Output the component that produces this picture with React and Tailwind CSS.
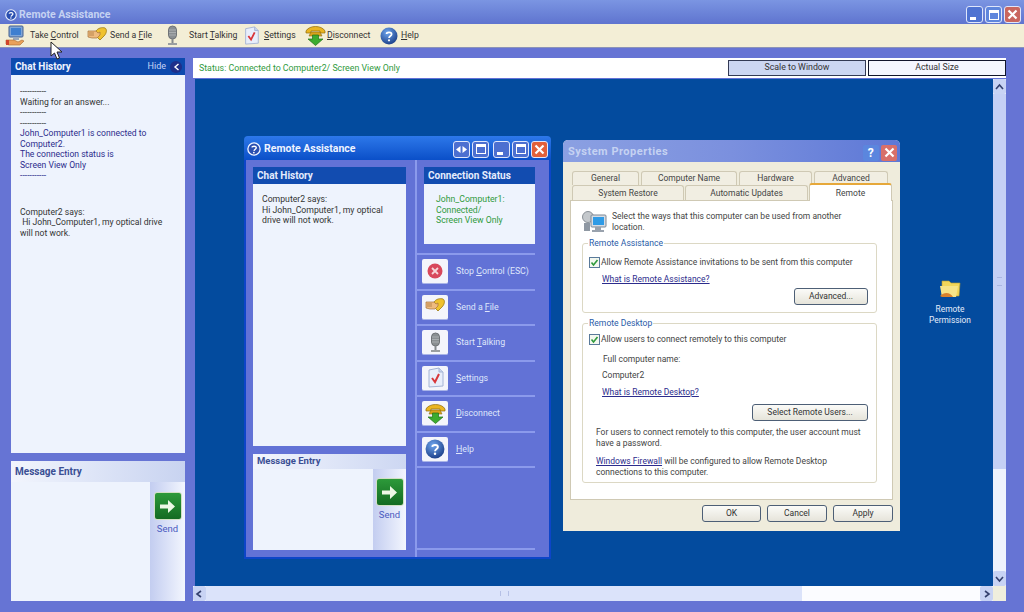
import React from 'react';

const font = { fontFamily: 'Roboto, "Liberation Sans", sans-serif' };

function RaGlyph({ size = 14 }) {
  return (
    <svg width={size} height={size} viewBox="0 0 16 16" className="shrink-0">
      <circle cx="8" cy="8" r="7" fill="#2a4fb0" stroke="#eef3ff" strokeWidth="1.5" />
      <path d="M5.5 6.2C5.8 4.4 10.4 4.2 10.6 6.4C10.7 8 8.3 8.4 8 10.2" fill="none" stroke="#fff" strokeWidth="1.6" />
      <circle cx="7.8" cy="12" r="1" fill="#fff" />
    </svg>
  );
}

function TakeControlIcon() {
  return (
    <svg width="21" height="21" viewBox="0 0 21 21" className="shrink-0">
      <rect x="4" y="1" width="14" height="11" rx="1" fill="#7fa6d8" stroke="#47608f" />
      <rect x="6" y="3" width="10" height="7" fill="#3f7fd0" />
      <path d="M8 12h6v3H8z" fill="#9aa9bd" />
      <path d="M1 15h8l4 2 4-2 2 1-4 4H4l-3-1z" fill="#e9a15a" stroke="#a8642a" strokeWidth=".6" />
      <path d="M1 15h3v5H1z" fill="#d0442a" />
    </svg>
  );
}

function SendFileIcon({ size = 21 }) {
  return (
    <svg width={size} height={size} viewBox="0 0 21 21" className="shrink-0">
      <path d="M9 6c2-3 6-4 9-3 2 1 2 5-1 8l-4 4-3-3c-1-2-2-4-1-6z" fill="#f0c22e" stroke="#9c7a12" strokeWidth=".8" />
      <path d="M1 6h8l2 2 2-1v3l-3 3H5l-4-1z" fill="#efbb7f" stroke="#a5713a" strokeWidth=".7" />
      <path d="M2 8h5M2 10h5" stroke="#a5713a" strokeWidth=".7" />
    </svg>
  );
}

function MicIcon({ size = 21 }) {
  return (
    <svg width={size} height={size} viewBox="0 0 21 21" className="shrink-0">
      <rect x="6.5" y="1" width="8" height="13" rx="4" fill="#8a8f92" stroke="#6f7376" />
      <path d="M7 5h7M7 7.5h7M7 10h7" stroke="#a9adb0" />
      <path d="M10.5 14v4" stroke="#85898c" strokeWidth="2" />
      <path d="M6 19h9" stroke="#9a9ea1" strokeWidth="2" />
    </svg>
  );
}

function SettingsIcon({ size = 21 }) {
  return (
    <svg width={size} height={size} viewBox="0 0 21 21" className="shrink-0">
      <path d="M4 3l10-2 4 4v14l-14 1z" fill="#e8eefb" stroke="#a5b4d4" />
      <path d="M14 1v4h4" fill="#c8d4ec" stroke="#a5b4d4" />
      <path d="M7 11l3 4 4-8" fill="none" stroke="#d8363a" strokeWidth="2" />
    </svg>
  );
}

function PhoneIcon({ size = 21 }) {
  return (
    <svg width={size} height={size} viewBox="0 0 21 21" className="shrink-0">
      <path d="M1 6c3-6 16-6 19 0v2h-5V6H6v2H1z" fill="#eab521" stroke="#8c6a10" strokeWidth=".7" />
      <path d="M6 7h9l2 4H4z" fill="#d8a31c" stroke="#8c6a10" strokeWidth=".6" />
      <path d="M7.5 10h6v4H18l-7.5 6.5L3 14h4.5z" fill="#3cab2e" stroke="#1f7018" strokeWidth=".7" />
    </svg>
  );
}

function HelpIcon({ size = 18 }) {
  return (
    <svg width={size} height={size} viewBox="0 0 18 18" className="shrink-0">
      <defs>
        <radialGradient id="helpball" cx=".4" cy=".3" r=".8">
          <stop offset="0" stopColor="#6ea6ee" />
          <stop offset="1" stopColor="#14357f" />
        </radialGradient>
      </defs>
      <circle cx="9" cy="9" r="8.5" fill="url(#helpball)" />
      <path d="M6.5 7C6.8 4.8 11.6 4.8 11.6 7.2C11.6 9 9.2 9 9 11" fill="none" stroke="#fff" strokeWidth="1.7" />
      <circle cx="9" cy="13.3" r="1.1" fill="#fff" />
    </svg>
  );
}

function StopIcon() {
  return (
    <svg width="16" height="16" viewBox="0 0 16 16" className="shrink-0">
      <circle cx="8" cy="8" r="7.5" fill="#d8485c" />
      <path d="M5 5l6 6M11 5l-6 6" stroke="#f6d6da" strokeWidth="1.8" />
    </svg>
  );
}

function NetworkIcon() {
  return (
    <svg width="26" height="26" viewBox="0 0 26 26" className="shrink-0">
      <circle cx="6" cy="8" r="5.5" fill="#c4c8cc" stroke="#8a9097" />
      <rect x="9" y="6" width="15" height="12" rx="1" fill="#d6dce4" stroke="#7d8794" />
      <rect x="11" y="8" width="11" height="8" fill="#2f9be6" />
      <path d="M13 18h6v3h3v2H10v-2h3z" fill="#99a2ad" />
      <path d="M2 14h6v8H2z" fill="#8f98a3" />
    </svg>
  );
}

function FolderIcon() {
  return (
    <svg width="24" height="24" viewBox="0 0 24 24" className="shrink-0">
      <path d="M4 4h7l2 2h9l-1 13H4z" fill="#f2d65a" stroke="#b69a2c" strokeWidth=".6" />
      <path d="M2 9h18l-2 11H4z" fill="#f7e488" />
      <path d="M2 19c4-4 10-4 13 1H4z" fill="#d9822e" />
    </svg>
  );
}

function SendButton() {
  return (
    <div className="flex flex-col items-center">
      <div className="flex h-[28px] w-[28px] items-center justify-center rounded-[3px] border border-[#d3e0c4] bg-linear-to-b from-[#2d9a3a] to-[#146b22]">
        <svg width="17" height="15" viewBox="0 0 17 15">
          <path d="M1 5.5h8V1l7 6.5-7 6.5V9.5H1z" fill="#eef8e6" />
        </svg>
      </div>
      <span className="mt-[3px] text-[9.5px] leading-[12px] text-[#4a5ac0]">Send</span>
    </div>
  );
}

function CaptionBtn({ children, color = 'bg-[#4c6fd0]' }) {
  return (
    <div className={`flex h-[17px] w-[17px] items-center justify-center rounded-[3px] border border-[#dfe6fb] ${color}`}>
      {children}
    </div>
  );
}

const MinGlyph = () => <div className="mt-[8px] mr-[3px] h-[3px] w-[6px] bg-white" />;
const MaxGlyph = () => <div className="h-[10px] w-[10px] border border-t-[3px] border-white" />;
const CloseGlyph = () => (
  <svg width="11" height="11" viewBox="0 0 11 11">
    <path d="M1.5 1.5l8 8M9.5 1.5l-8 8" stroke="#fff" strokeWidth="2.2" />
  </svg>
);

function ToolItem({ icon, children, className = '' }) {
  return (
    <div className={`flex h-[24px] shrink-0 items-center text-[8.7px] whitespace-nowrap text-[#333] ${className}`}>
      {icon}
      {children}
    </div>
  );
}

function Toolbar() {
  return (
    <div className="flex h-[24px] shrink-0 items-center border-b border-[#8b93b8] bg-[#f3eed6] pl-[5px]">
      <ToolItem icon={<TakeControlIcon />} className="w-[82px] gap-[4px]">
        <span>Take <u>C</u>ontrol</span>
      </ToolItem>
      <ToolItem icon={<SendFileIcon />} className="w-[75px] gap-[2px]">
        <span>Send a <u>F</u>ile</span>
      </ToolItem>
      <ToolItem icon={<MicIcon />} className="w-[80px] gap-[6px]">
        <span>Start <u>T</u>alking</span>
      </ToolItem>
      <ToolItem icon={<SettingsIcon size={19} />} className="w-[63px] gap-[3px]">
        <span><u>S</u>ettings</span>
      </ToolItem>
      <ToolItem icon={<PhoneIcon />} className="w-[75px] gap-[1px]">
        <span><u>D</u>isconnect</span>
      </ToolItem>
      <ToolItem icon={<HelpIcon />} className="gap-[3px]">
        <span><u>H</u>elp</span>
      </ToolItem>
    </div>
  );
}

function SideBar() {
  return (
    <div className="flex w-[174px] shrink-0 flex-col gap-[8px]">
      <div className="flex h-[395px] flex-col">
        <div className="flex h-[17px] items-center justify-between bg-[#0d4aae] pr-[3px] pl-[4px] text-[10px] font-bold text-[#f0f4ff]">
          <span>Chat History</span>
          <div className="flex items-center gap-[4px] text-[9px] font-normal text-[#c7d4f6]">
            <span>Hide</span>
            <div className="flex h-[12px] w-[12px] items-center justify-center rounded-full bg-[#1e2f8a]">
              <svg width="7" height="8" viewBox="0 0 7 8"><path d="M5.5 1L2 4l3.5 3" fill="none" stroke="#fff" strokeWidth="1.4" /></svg>
            </div>
          </div>
        </div>
        <div className="flex-1 bg-[#eef3fd] pt-[11px] pl-[9px] text-[8.6px] leading-[10.5px] whitespace-nowrap text-[#333]">
          <p>-----------</p>
          <p>Waiting for an answer...</p>
          <p>-----------</p>
          <p>-----------</p>
          <div className="text-[#2c2c8c]">
            <p>John_Computer1 is connected to</p>
            <p>Computer2.</p>
            <p>The connection status is</p>
            <p>Screen View Only</p>
            <p>-----------</p>
          </div>
          <p className="mt-[26px]">Computer2 says:</p>
          <p>&nbsp;Hi John_Computer1, my optical drive</p>
          <p>will not work.</p>
        </div>
      </div>
      <div className="flex h-[140px] flex-col bg-[#eef3fd]">
        <div className="flex h-[21px] items-center bg-linear-to-r from-[#f2f5fd] to-[#c8d3f0] pl-[4px] text-[10px] font-bold text-[#3a4f94]">
          Message Entry
        </div>
        <div className="flex flex-1">
          <div className="flex-1" />
          <div className="flex w-[35px] justify-center bg-linear-to-r from-[#c3cdf0] to-[#f3f6fe] pt-[10px]">
            <SendButton />
          </div>
        </div>
      </div>
    </div>
  );
}

function ActionRow({ icon, children }) {
  return (
    <div className="flex h-[35.5px] items-center gap-[8px] border-b-2 border-[#8b9aec] pl-[5px] text-[8.8px] whitespace-nowrap text-[#dfe6fb]">
      <div className="flex h-[25px] w-[26px] items-center justify-center rounded-[2px] border-b border-[#a9b4e8] bg-[#f4f5fb]">
        {icon}
      </div>
      <span>{children}</span>
    </div>
  );
}

function RemoteWindow() {
  return (
    <div className="absolute top-[57px] left-[49px] flex h-[423px] w-[307px] flex-col">
      <div className="flex h-[24px] shrink-0 items-center justify-between rounded-t-[4px] bg-linear-to-b from-[#2d78ea] to-[#0a4fc8] pt-[2px] pr-[3px] pl-[3px] text-[10.5px] font-bold text-[#eef3ff]">
        <div className="flex items-center gap-[3px]">
          <RaGlyph />
          <span>Remote Assistance</span>
        </div>
        <div className="flex items-center gap-[2px]">
          <CaptionBtn>
            <svg width="11" height="7" viewBox="0 0 11 7"><path d="M4.5 0v7L0 3.5zM6.5 0v7L11 3.5z" fill="#fff" /></svg>
          </CaptionBtn>
          <CaptionBtn>
            <div className="h-[10px] w-[10px] border border-t-[3px] border-white" />
          </CaptionBtn>
          <div className="w-0" />
          <CaptionBtn><MinGlyph /></CaptionBtn>
          <CaptionBtn><MaxGlyph /></CaptionBtn>
          <CaptionBtn color="bg-[#e2603a]"><CloseGlyph /></CaptionBtn>
        </div>
      </div>
      <div className="flex min-h-0 flex-1 border-2 border-t-0 border-[#0d45c8] bg-[#6272d6]">
        <div className="flex w-[169px] shrink-0 flex-col pt-[7px] pl-[7px]">
          <div className="flex h-[17px] w-[153px] items-center bg-[#124cb0] pl-[4px] text-[10px] font-bold text-[#e6ecfd]">Chat History</div>
          <div className="h-[262px] w-[153px] bg-[#eef3fd] pt-[10px] pl-[9px] text-[8.7px] leading-[10.5px] whitespace-nowrap text-[#333]">
            <p>Computer2 says:</p>
            <p>Hi John_Computer1, my optical</p>
            <p>drive will not work.</p>
          </div>
          <div className="mt-[8px] flex h-[96px] w-[153px] flex-col bg-[#eef3fd]">
            <div className="flex h-[15px] items-center bg-linear-to-r from-[#f2f5fd] to-[#cdd7f2] pl-[4px] text-[9.5px] font-bold text-[#3a4f94]">
              Message Entry
            </div>
            <div className="flex flex-1">
              <div className="flex-1" />
              <div className="flex w-[33px] justify-center bg-linear-to-r from-[#c3cdf0] to-[#f3f6fe] pt-[9px]">
                <SendButton />
              </div>
            </div>
          </div>
        </div>
        <div className="flex min-w-0 flex-1 flex-col border-l-2 border-[#8b9aec] pr-[14px]">
          <div className="pt-[7px] pb-[9px] pl-[7px]">
            <div className="flex h-[17px] items-center bg-[#124cb0] pl-[4px] text-[10px] font-bold text-[#e6ecfd]">Connection Status</div>
            <div className="h-[60px] bg-[#eef3fd] pt-[10px] pl-[12px] text-[8.7px] leading-[10.5px] text-[#2f9a3c]">
              <p>John_Computer1:</p>
              <p>Connected/</p>
              <p>Screen View Only</p>
            </div>
          </div>
          <div className="border-t-2 border-[#8b9aec]" />
          <ActionRow icon={<StopIcon />}>Stop <u>C</u>ontrol (ESC)</ActionRow>
          <ActionRow icon={<SendFileIcon />}>Send a <u>F</u>ile</ActionRow>
          <ActionRow icon={<MicIcon />}>Start <u>T</u>alking</ActionRow>
          <ActionRow icon={<SettingsIcon />}><u>S</u>ettings</ActionRow>
          <ActionRow icon={<PhoneIcon />}><u>D</u>isconnect</ActionRow>
          <ActionRow icon={<HelpIcon size={20} />}><u>H</u>elp</ActionRow>
          <div className="h-[82px] border-b-2 border-[#8b9aec]" />
        </div>
      </div>
    </div>
  );
}

function Tab({ w, children, className = '' }) {
  return (
    <div className={`flex items-center justify-center rounded-t-[3px] border border-b-0 border-[#cfc9b4] bg-[#f1eee2] text-[8.5px] text-[#444] ${w} ${className}`}>
      {children}
    </div>
  );
}

function XpCheck() {
  return (
    <div className="flex h-[11px] w-[11px] shrink-0 items-center justify-center border border-[#5a7a9a] bg-[#f4f8f0]">
      <svg width="9" height="9" viewBox="0 0 9 9"><path d="M1.5 4.5l2 2.5 4-5" fill="none" stroke="#2f9a3c" strokeWidth="1.6" /></svg>
    </div>
  );
}

function XpButton({ w, children, className = '' }) {
  return (
    <div className={`flex h-[17px] items-center justify-center rounded-[3px] border border-[#4d5f76] bg-linear-to-b from-[#fbfbf8] to-[#e6e4da] text-[8.5px] text-[#333] ${w} ${className}`}>
      {children}
    </div>
  );
}

function GroupBox({ title, className = '', children }) {
  return (
    <div className={`relative rounded-[3px] border border-[#dcd8c4] ${className}`}>
      <span className="absolute top-[-7px] left-[5px] bg-white px-[1px] text-[8.6px] leading-[13px] text-[#2a5ca8]">{title}</span>
      {children}
    </div>
  );
}

const xpLink = 'text-[#2c2c8c] underline';

function SystemProperties() {
  return (
    <div className="absolute top-[61px] left-[368px] flex h-[391px] w-[337px] flex-col rounded-t-[5px] bg-[#efecdc] text-[8.5px] whitespace-nowrap text-[#444]">
      <div className="flex h-[22px] shrink-0 items-center justify-between rounded-t-[5px] bg-linear-to-r from-[#8ba0e2] via-[#7b90de] to-[#5d78d6] pt-[3px] pr-[3px] pl-[5px] text-[11px] font-bold tracking-[0.5px] text-[#c5d2f2]">
        <span>System Properties</span>
        <div className="flex gap-[2px]">
          <div className="flex h-[16px] w-[16px] items-center justify-center rounded-[2px] bg-[#5b86de] text-[12px] font-bold text-white">?</div>
          <div className="flex h-[16px] w-[16px] items-center justify-center rounded-[2px] bg-[#d8706a]"><CloseGlyph /></div>
        </div>
      </div>
      <div className="mt-[9px] flex h-[14px] gap-[2px] pl-[9px]">
        <Tab w="w-[67px]">General</Tab>
        <Tab w="w-[96px]">Computer Name</Tab>
        <Tab w="w-[73px]">Hardware</Tab>
        <Tab w="w-[74px]">Advanced</Tab>
      </div>
      <div className="flex h-[15px] pl-[9px]">
        <Tab w="w-[112px]">System Restore</Tab>
        <Tab w="ml-[1px] w-[123px]">Automatic Updates</Tab>
        <Tab w="relative z-10 mt-[-2px] ml-[1px] h-[18px] w-[83px] border-t-2 border-t-[#e6a83a] bg-white">Remote</Tab>
      </div>
      <div className="mx-[7px] flex h-[300px] flex-col border border-[#cfc9b4] bg-white pt-[8px] pr-[15px] pl-[11px]">
        <div className="flex h-[34px] gap-[4px] leading-[10.5px]">
          <NetworkIcon />
          <div className="pt-[2px]">
            <p>Select the ways that this computer can be used from another</p>
            <p>location.</p>
          </div>
        </div>
        <GroupBox title="Remote Assistance" className="h-[70px] pt-[12px] pl-[6px]">
          <div className="flex items-center gap-[1px]">
            <XpCheck />
            <span>Allow Remote Assistance invitations to be sent from this computer</span>
          </div>
          <p className={`mt-[3px] ml-[13px] leading-[15px] ${xpLink}`}>What is Remote Assistance?</p>
          <div className="mt-[1px] flex justify-end pr-[8px]">
            <XpButton w="w-[74px]">Advanced...</XpButton>
          </div>
        </GroupBox>
        <GroupBox title="Remote Desktop" className="mt-[10px] h-[160px] pt-[9px] pl-[6px]">
          <div className="flex items-center gap-[1px]">
            <XpCheck />
            <span>Allow users to connect remotely to this computer</span>
          </div>
          <p className="mt-[6px] ml-[14px] leading-[14px]">Full computer name:</p>
          <p className="mt-[2px] ml-[13px] leading-[14px]">Computer2</p>
          <p className={`mt-[3px] ml-[13px] leading-[14px] ${xpLink}`}>What is Remote Desktop?</p>
          <div className="mt-[5px] flex justify-end pr-[8px]">
            <XpButton w="w-[116px]">Select Remote Users...</XpButton>
          </div>
          <div className="mt-[6px] ml-[7px] leading-[11px]">
            <p>For users to connect remotely to this computer, the user account must</p>
            <p>have a password.</p>
          </div>
          <div className="mt-[7px] ml-[7px] leading-[11px]">
            <p><span className={xpLink}>Windows Firewall</span> will be configured to allow Remote Desktop</p>
            <p>connections to this computer.</p>
          </div>
        </GroupBox>
      </div>
      <div className="mt-[5px] flex justify-end gap-[6px] pr-[7px]">
        <XpButton w="w-[59px]">OK</XpButton>
        <XpButton w="w-[60px]">Cancel</XpButton>
        <XpButton w="w-[60px]">Apply</XpButton>
      </div>
    </div>
  );
}

function ScrollBtn({ d }) {
  return (
    <div className="flex h-[15px] w-[13px] shrink-0 items-center justify-center rounded-[2px] bg-[#c8d3f4]">
      <svg width="9" height="8" viewBox="0 0 9 8"><path d={d} fill="none" stroke="#34406e" strokeWidth="1.6" /></svg>
    </div>
  );
}

function MainArea() {
  return (
    <div className="flex min-w-0 flex-1 flex-col">
      <div className="flex h-[21px] shrink-0 items-center justify-between border-b border-[#6272d6] bg-white pl-[6px] text-[8.8px] text-[#2f9a3c]">
        <span className="mt-[2px]">Status: Connected to Computer2/ Screen View Only</span>
        <div className="flex gap-[2px]">
          <div className="flex h-[16px] w-[138px] items-center justify-center border border-[#333a55] bg-[#ccd6f2] text-[#333]">Scale to Window</div>
          <div className="flex h-[16px] w-[138px] items-center justify-center border border-[#11152c] bg-[#f4f6fe] text-[#333]">Actual Size</div>
        </div>
      </div>
      <div className="flex min-h-0 flex-1 pl-[2px]">
        <div className="relative flex-1 bg-[#034b9e]">
          <RemoteWindow />
          <SystemProperties />
          <div className="absolute top-[198px] left-[725px] flex w-[60px] flex-col items-center text-center text-[8.4px] leading-[10.5px] text-[#e4ecfa]">
            <FolderIcon />
            <span className="mt-[3px]">Remote</span>
            <span>Permission</span>
          </div>
        </div>
        <div className="flex w-[13px] flex-col bg-[#eef2fd]">
          <ScrollBtn d="M1 6l3.5-4L8 6" />
          <div className="flex h-[375px] items-center justify-center bg-[#c5d0f5]">
            <div className="h-[9px] w-[5px] border-y border-[#aab6e2]" />
          </div>
          <div className="flex-1" />
          <ScrollBtn d="M1 2l3.5 4L8 2" />
        </div>
      </div>
      <div className="flex h-[15px] shrink-0 bg-[#fbfcff]">
        <ScrollBtn d="M6 1L2 4l4 3" />
        <div className="flex w-[596px] items-center justify-center bg-[#dbe3fa]">
          <div className="h-[5px] w-[9px] border-x border-[#b5c0e6]" />
        </div>
        <div className="flex-1" />
        <ScrollBtn d="M3 1l4 3-4 3" />
        <div className="w-[13px] bg-[#efeedd]" />
      </div>
    </div>
  );
}

export default function App() {
  return (
    <div className="relative flex h-[612px] w-[1024px] flex-col overflow-hidden bg-[#6674d4]" style={font}>
      <div className="flex h-[24px] shrink-0 items-center justify-between bg-linear-to-b from-[#7b95e2] to-[#5f74cf] pt-[5px] pr-[3px] pl-[5px]">
        <div className="flex items-center gap-[2px] text-[10.5px] font-bold text-[#c5d2f2]">
          <RaGlyph size={12} />
          <span>Remote Assistance</span>
        </div>
        <div className="flex gap-[2px]">
          <CaptionBtn color="bg-[#4f73d2]"><MinGlyph /></CaptionBtn>
          <CaptionBtn color="bg-[#5f86dc]"><MaxGlyph /></CaptionBtn>
          <CaptionBtn color="bg-[#c9665f]"><CloseGlyph /></CaptionBtn>
        </div>
      </div>
      <Toolbar />
      <div className="flex min-h-0 flex-1 gap-[8px] pt-[10px] pr-[18px] pb-[11px] pl-[11px]">
        <SideBar />
        <MainArea />
      </div>
      <svg width="13" height="19" viewBox="0 0 13 19" className="absolute top-[41px] left-[50px]">
        <path d="M1 1v14l3.5-3 2.5 6 2.5-1-2.5-6h5z" fill="#fff" stroke="#222" strokeWidth="1" />
      </svg>
    </div>
  );
}
